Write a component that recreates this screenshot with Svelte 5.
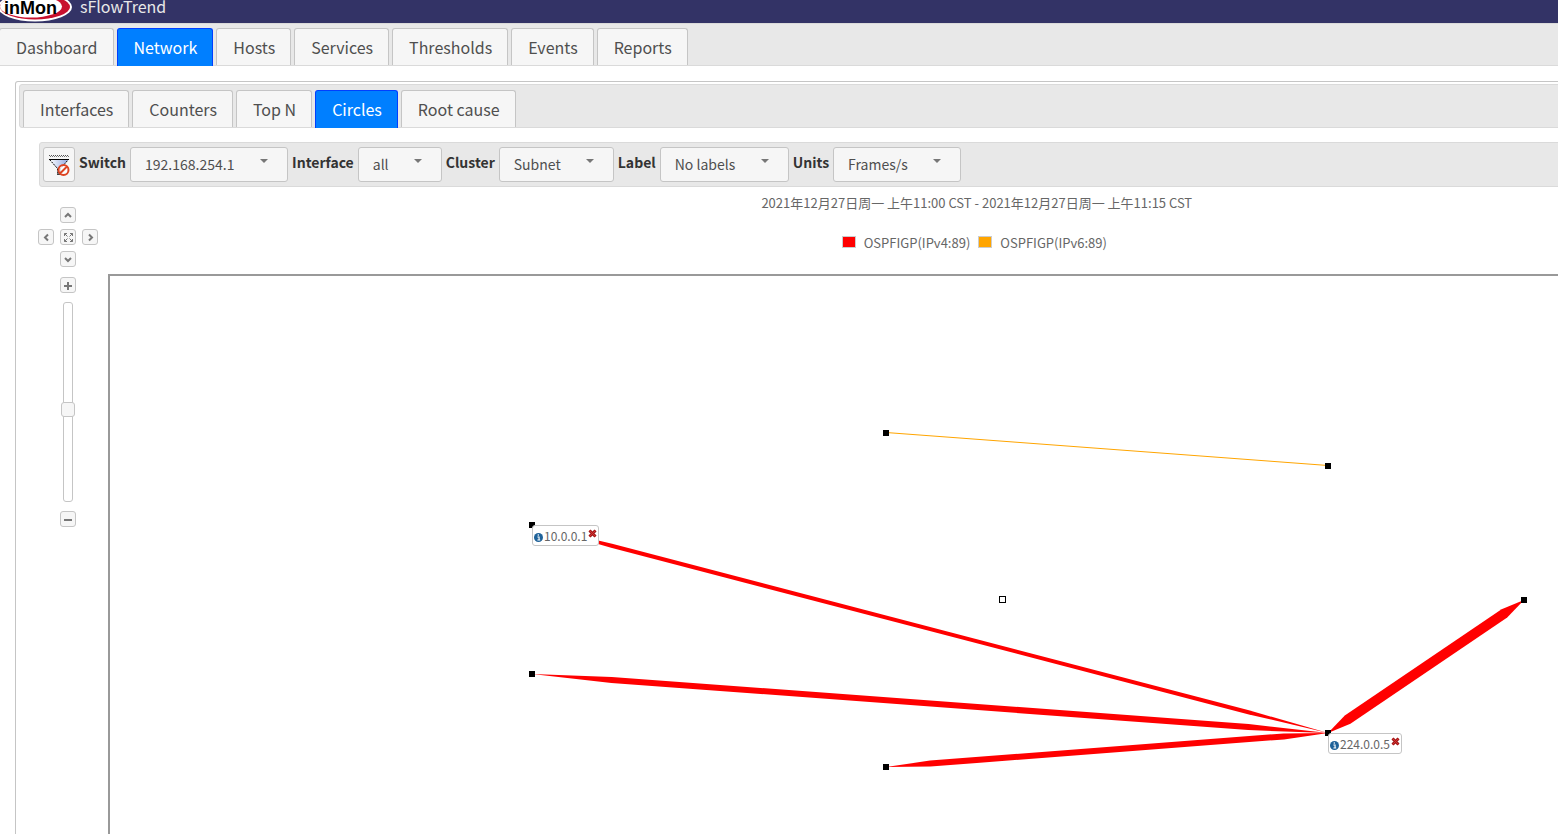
<script>
  const mainTabs = ['Dashboard', 'Network', 'Hosts', 'Services', 'Thresholds', 'Events', 'Reports'];
  const subTabs = ['Interfaces', 'Counters', 'Top N', 'Circles', 'Root cause'];
  const filters = [
    { label: 'Switch', value: '192.168.254.1' },
    { label: 'Interface', value: 'all' },
    { label: 'Cluster', value: 'Subnet' },
    { label: 'Label', value: 'No labels' },
    { label: 'Units', value: 'Frames/s' }
  ];
  const legend = [
    { name: 'OSPFIGP(IPv4:89)', color: '#ff0000' },
    { name: 'OSPFIGP(IPv6:89)', color: '#ffa500' }
  ];

  const nodes = {
    a: [776, 157],
    b: [1218, 190],
    c: [422, 249],
    d: [422, 398],
    e: [776, 491],
    f: [1218, 457],
    g: [1414, 324]
  };
  const flows = [
    { from: 'c', to: 'f', half: 2 },
    { from: 'd', to: 'f', half: 3 },
    { from: 'e', to: 'f', half: 3 },
    { from: 'f', to: 'g', half: 5 }
  ];
  const hosts = [
    { node: 'c', name: '10.0.0.1' },
    { node: 'f', name: '224.0.0.5' }
  ];

  let mainTab = $state('Network');
  let subTab = $state('Circles');
  let zoom = $state(46);

  // A flow is a band that tapers to a point over the first and last tenth.
  function band({ from, to, half }) {
    const [x1, y1] = nodes[from];
    const [x2, y2] = nodes[to];
    const dx = x2 - x1;
    const dy = y2 - y1;
    const len = Math.hypot(dx, dy);
    const nx = (-dy / len) * half;
    const ny = (dx / len) * half;
    const at = (t, s) => `${x1 + dx * t + nx * s},${y1 + dy * t + ny * s}`;
    return [at(0, 0), at(0.1, 1), at(0.9, 1), at(1, 0), at(0.9, -1), at(0.1, -1)].join(' ');
  }
</script>

<div class="app">
  <header class="brand">
    <svg class="logo" width="74" height="34" viewBox="0 0 74 34" role="img" aria-label="inMon">
      <ellipse cx="35" cy="19" rx="37" ry="14.500" fill="#fff" />
      <ellipse cx="35" cy="19" rx="35" ry="12.500" fill="#c8102e" />
      <ellipse cx="31" cy="18.500" rx="31" ry="11" fill="#fff" />
      <text x="4" y="26" class="wordmark">inMon</text>
    </svg>
    <span class="product">sFlowTrend</span>
  </header>

  <nav class="tabs main-tabs" aria-label="Main">
    {#each mainTabs as tab}
      <button class="tab" class:active={tab === mainTab} onclick={() => (mainTab = tab)}>{tab}</button>
    {/each}
  </nav>

  <main class="panel">
    <nav class="tabs sub-tabs" aria-label="Network">
      {#each subTabs as tab}
        <button class="tab" class:active={tab === subTab} onclick={() => (subTab = tab)}>{tab}</button>
      {/each}
    </nav>

    <form class="toolbar">
      <button type="button" class="clear" aria-label="Clear filter">
        <svg width="22" height="24" viewBox="0 0 22 24">
          <defs>
            <linearGradient id="funnel" x1="0" x2="1" y1="0" y2="0">
              <stop offset="0" stop-color="#fff" />
              <stop offset="1" stop-color="#8fa6e0" />
            </linearGradient>
          </defs>
          <path d="M1 2.500h20" stroke="#555" stroke-dasharray="1 1" />
          <path d="M2 3.500h19" stroke="#777" stroke-dasharray="1 1" />
          <path d="M1.500 6.500h19l-8 9v5h-3v-5z" fill="url(#funnel)" stroke="#000" stroke-dasharray="2 1" />
          <path d="M1 6.500h20" stroke="#000" />
          <path d="M9 19.500h4M9 21.500h4" stroke="#444" />
          <circle cx="15.500" cy="17" r="5" fill="#fff" fill-opacity=".8" stroke="#d42" stroke-width="2" />
          <path d="M12 20.500l7-7" stroke="#d42" stroke-width="2" />
        </svg>
      </button>
      {#each filters as f}
        <label for={f.label}>{f.label}</label>
        <span class="select">
          <select id={f.label}><option>{f.value}</option></select>
          <svg width="8" height="4" viewBox="0 0 8 4"><path d="M0 0h8L4 4z" fill="#777" /></svg>
        </span>
      {/each}
    </form>

    <div class="view">
      <aside class="controls">
        <div class="pan">
          <button class="mini up" aria-label="Pan up"><svg viewBox="0 0 14 14"><path d="M4 9l3-3 3 3" /></svg></button>
          <button class="mini left" aria-label="Pan left"><svg viewBox="0 0 14 14"><path d="M9 4.500l-3 3 3 3" /></svg></button>
          <button class="mini fit" aria-label="Fit">
            <svg class="thin" viewBox="0 0 14 14">
              <path d="M3.500 6V3.500H6M9 3.500h2.500V6M11.500 9v2.500H9M6 11.500H3.500V9M3.500 3.500l3 3M11.500 3.500l-3 3M11.500 11.500l-3-3M3.500 11.500l3-3" />
            </svg>
          </button>
          <button class="mini right" aria-label="Pan right"><svg viewBox="0 0 14 14"><path d="M6 4.500l3 3-3 3" /></svg></button>
          <button class="mini down" aria-label="Pan down"><svg viewBox="0 0 14 14"><path d="M4 6l3 3 3-3" /></svg></button>
        </div>
        <button class="mini" aria-label="Zoom in"><svg viewBox="0 0 14 14"><path d="M3 8h8M7 4v8" /></svg></button>
        <input class="zoom" type="range" min="0" max="100" bind:value={zoom} aria-label="Zoom" />
        <button class="mini" aria-label="Zoom out"><svg viewBox="0 0 14 14"><path d="M3 8h8" /></svg></button>
      </aside>

      <section class="chart">
        <p class="period">2021年12月27日周一 上午11:00 CST - 2021年12月27日周一 上午11:15 CST</p>
        <ul class="legend">
          {#each legend as item}
            <li><i style="background:{item.color}"></i>{item.name}</li>
          {/each}
        </ul>
        <div class="canvas">
          <svg class="graph" aria-hidden="true">
            <path d="M776 156.500L1218 189.500" stroke="#ffa500" fill="none" />
            {#each flows as flow}
              <polygon points={band(flow)} fill="#f00" />
            {/each}
            {#each Object.values(nodes) as [x, y]}
              <rect x={x - 3} y={y - 3} width="6" height="6" />
            {/each}
            <rect x="889.5" y="320.5" width="6" height="6" fill="#fff" stroke="#000" />
          </svg>
          {#each hosts as host}
            <div class="host" style="left:{nodes[host.node][0]}px;top:{nodes[host.node][1]}px">
              <svg width="9" height="9" viewBox="0 0 8 8">
                <circle cx="4" cy="4" r="4" fill="#1f6299" />
                <path d="M3 3.500h1.500V6M3 6.200h2.500M3.800 1.200v1.300" stroke="#fff" fill="none" />
              </svg>
              <span>{host.name}</span>
              <button aria-label="Close {host.name}">
                <svg width="9" height="9" viewBox="0 0 9 9">
                  <path d="M1.500 1.500l6 6M7.500 1.500l-6 6" stroke="#a01818" stroke-width="3" />
                  <path d="M1.500 1.500l6 6M7.500 1.500l-6 6" stroke="#d83030" />
                </svg>
              </button>
            </div>
          {/each}
        </div>
      </section>
    </div>
  </main>
</div>

<style>
  :global(body) {
    overflow: hidden;
    background: #fff;
  }
  .app {
    width: 120%;
    font-family: 'Noto Sans CJK SC', 'Noto Sans', sans-serif;
    color: #4f4f4f;
  }
  .app * {
    box-sizing: border-box;
  }
  button,
  select {
    font: inherit;
    color: inherit;
    padding: 0;
    background: #f6f6f6;
    border: 1px solid #c5c5c5;
    border-radius: 3px;
  }
  .brand {
    display: flex;
    align-items: flex-end;
    gap: 6px;
    height: 23px;
    background: #333366;
    overflow: hidden;
  }
  .logo {
    flex: none;
    margin-bottom: 1px;
  }
  .wordmark {
    font: bold 18px 'Liberation Sans', sans-serif;
    fill: #000;
  }
  .product {
    align-self: flex-start;
    font-size: 16px;
    line-height: 12px;
    color: #e8e8e8;
  }
  .tabs {
    display: flex;
    gap: 3px;
    background: #e8e8e8;
    border: 1px solid #dadada;
    font-size: 16px;
  }
  .main-tabs {
    height: 43px;
    padding-top: 4px;
    border-left: 0;
    margin-left: -1px;
  }
  .sub-tabs {
    height: 44px;
    padding: 5px 3px 0;
    border-radius: 3px;
  }
  .tab {
    padding: 0 15px 0 16px;
    line-height: 37px;
    border-bottom: 0;
    border-radius: 3px 3px 0 0;
  }
  .tab.active {
    margin-bottom: -1px;
    background: #007fff;
    border-color: #003eff;
    color: #fff;
  }
  .panel {
    margin: 15px 4px 0 15px;
    padding: 2px 3px 0;
    border: 1px solid #c5c5c5;
    border-bottom: 0;
    border-radius: 3px 3px 0 0;
  }
  .toolbar {
    display: flex;
    align-items: center;
    gap: 4px;
    height: 45px;
    margin: 14px 16px 0 20px;
    padding: 0 3px;
    background: #e8e8e8;
    border: 1px solid #dadada;
    border-radius: 3px;
    font-size: 14px;
  }
  .clear {
    display: grid;
    place-items: center;
    width: 32px;
    height: 35px;
  }
  .toolbar label {
    padding-bottom: 6px;
    font-weight: bold;
    color: #333;
  }
  .select {
    position: relative;
  }
  .select select {
    display: block;
    appearance: none;
    height: 35px;
    padding: 0 52px 2px 14px;
  }
  .select svg {
    position: absolute;
    top: 12px;
    right: 20px;
    pointer-events: none;
  }
  .view {
    display: flex;
    gap: 11px;
    margin: 0 16px 0 20px;
  }
  .controls {
    display: flex;
    flex: none;
    flex-direction: column;
    align-items: center;
    width: 58px;
    padding-top: 20px;
  }
  .pan {
    display: grid;
    grid-template: 'a u b' 16px 'l f r' 16px 'c d e' 16px / 16px 16px 16px;
    gap: 6px;
    margin-bottom: 10px;
  }
  .up { grid-area: u; }
  .left { grid-area: l; }
  .fit { grid-area: f; }
  .right { grid-area: r; }
  .down { grid-area: d; }
  .mini {
    display: block;
    width: 16px;
    height: 16px;
  }
  .mini svg {
    display: block;
    width: 14px;
    height: 14px;
    fill: none;
    stroke: #777;
    stroke-width: 2;
  }
  .mini svg.thin {
    stroke-width: 1;
  }
  .zoom {
    appearance: none;
    writing-mode: vertical-lr;
    direction: rtl;
    width: 14px;
    height: 200px;
    margin: 9px 0;
    background: transparent;
  }
  .zoom::-webkit-slider-runnable-track {
    width: 10px;
    height: 200px;
    border: 1px solid #c5c5c5;
    border-radius: 3px;
    background: #fff;
  }
  .zoom::-webkit-slider-thumb {
    appearance: none;
    width: 14px;
    height: 15px;
    margin-left: -3px;
    border: 1px solid #c5c5c5;
    border-radius: 3px;
    background: #f6f6f6;
  }
  .chart {
    flex: 1;
    min-width: 0;
    font-size: 13px;
    color: #666;
  }
  .period {
    margin: 6px 0 0;
    line-height: 20px;
    text-align: center;
  }
  .legend {
    display: flex;
    justify-content: center;
    gap: 8px;
    margin: 20px 5px 21px 0;
    padding: 0;
    list-style: none;
    line-height: 20px;
  }
  .legend li {
    display: flex;
    gap: 8px;
  }
  .legend i {
    width: 14px;
    height: 12px;
    margin-top: 3px;
    border: 1px solid #ccc;
  }
  .canvas {
    position: relative;
    height: calc(100vh - 274px);
    border: 2px solid #999;
    border-bottom: 0;
    overflow: hidden;
  }
  .graph {
    display: block;
    width: 100%;
    height: 100%;
  }
  .host {
    position: absolute;
    display: flex;
    align-items: center;
    gap: 1px;
    height: 21px;
    padding: 0 1px;
    border: 1px solid #c5c5c5;
    border-radius: 3px;
    background: #fff;
    font-size: 12px;
    line-height: 19px;
    white-space: nowrap;
  }
  .host svg {
    display: block;
  }
  .host > svg {
    margin-top: 3px;
  }
  .host button {
    margin-bottom: 4px;
    border: 0;
    background: none;
  }
</style>
